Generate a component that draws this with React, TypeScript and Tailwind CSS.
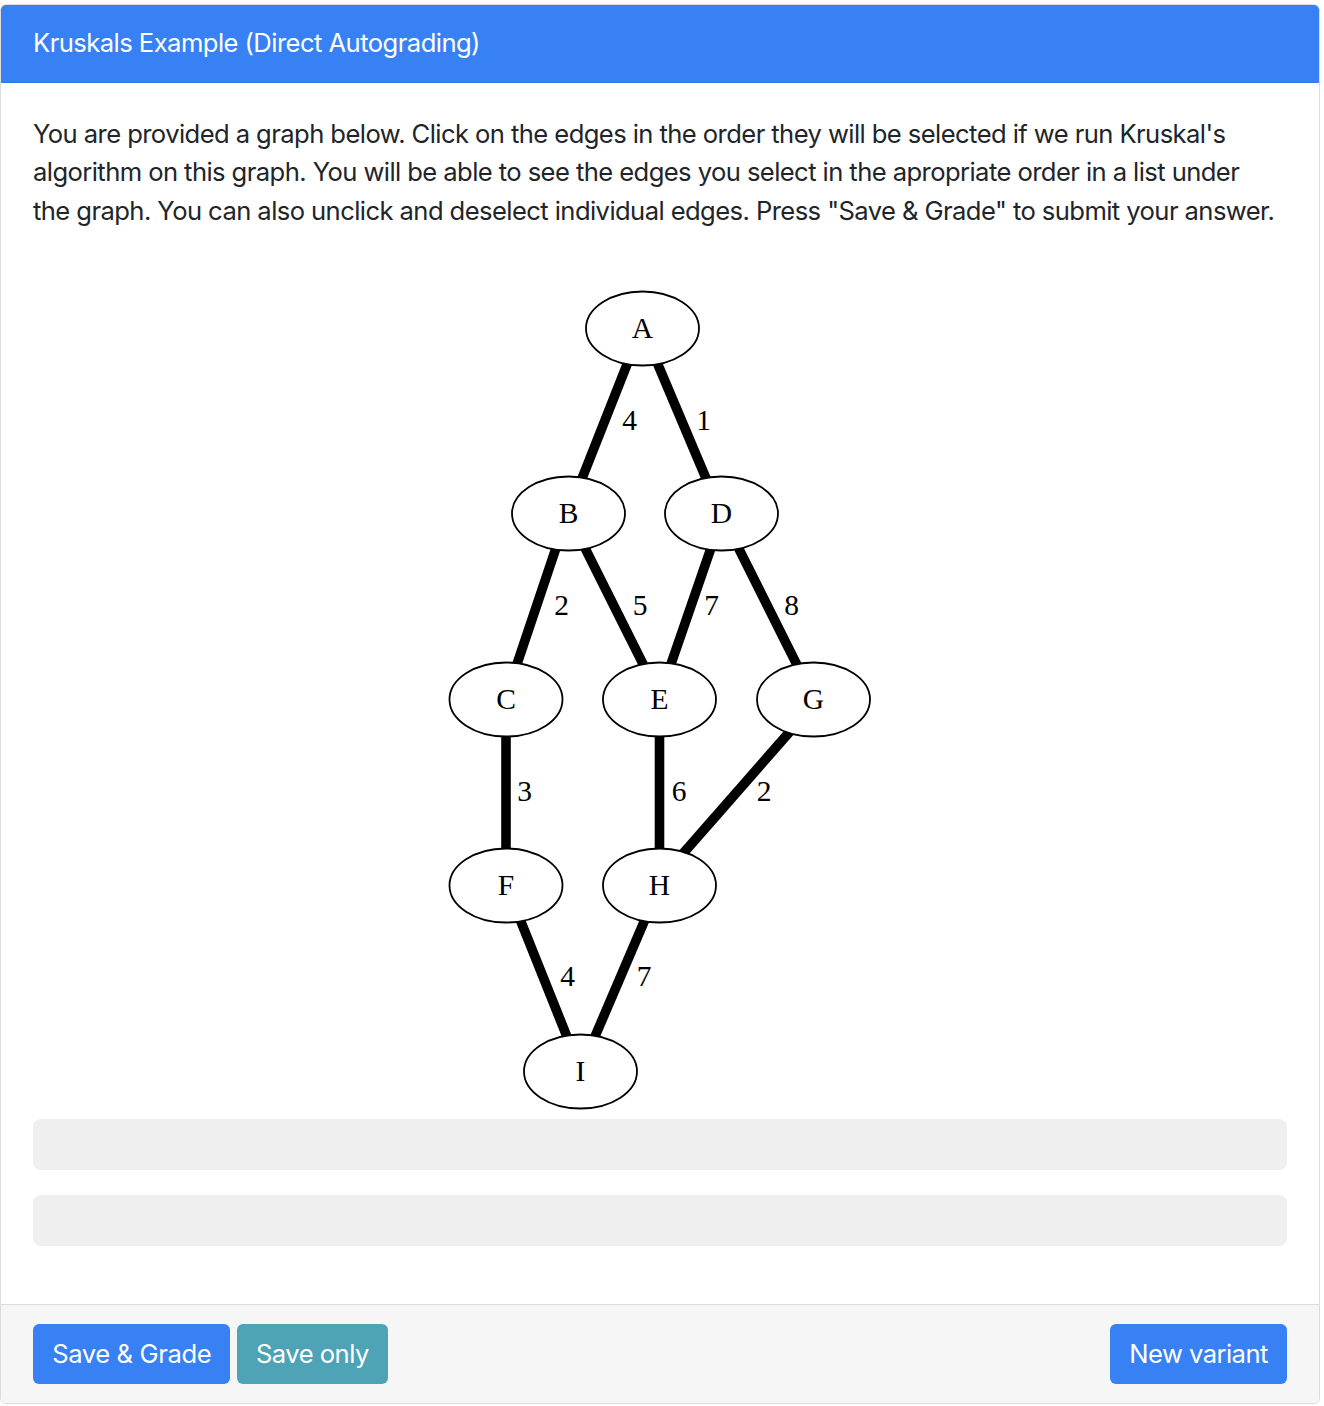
import React from "react";

type Pt = [number, number];

const nodes: { id: string; x: number; y: number }[] = [
  { id: "A", x: 642.5, y: 327.5 },
  { id: "B", x: 568.5, y: 512.5 },
  { id: "D", x: 721.5, y: 512.5 },
  { id: "C", x: 506, y: 698.5 },
  { id: "E", x: 659.5, y: 698.5 },
  { id: "G", x: 813.5, y: 698.5 },
  { id: "F", x: 506, y: 884.5 },
  { id: "H", x: 659.5, y: 884.5 },
  { id: "I", x: 580.5, y: 1070.5 },
];

const edges: { a: Pt; b: Pt; label: string; lx: number; ly: number }[] = [
  { a: [626, 366], b: [583, 475], label: "4", lx: 629.5, ly: 419 },
  { a: [659, 366], b: [705, 475], label: "1", lx: 703.5, ly: 419 },
  { a: [555, 550], b: [518, 660], label: "2", lx: 561.5, ly: 604 },
  { a: [586.5, 550], b: [641.5, 660], label: "5", lx: 640, ly: 604 },
  { a: [710, 550], b: [672, 660], label: "7", lx: 711.5, ly: 604 },
  { a: [740, 550], b: [795, 660], label: "8", lx: 791.5, ly: 604 },
  { a: [506, 736], b: [506, 847], label: "3", lx: 524.5, ly: 790 },
  { a: [659.5, 736], b: [659.5, 847], label: "6", lx: 679, ly: 790 },
  { a: [786, 735], b: [687, 848], label: "2", lx: 764, ly: 790 },
  { a: [521.5, 922], b: [565.5, 1032], label: "4", lx: 567.5, ly: 975 },
  { a: [643.5, 922], b: [596.5, 1032], label: "7", lx: 644, ly: 975 },
];

function ext(a: Pt, b: Pt, d: number): [Pt, Pt] {
  const dx = b[0] - a[0];
  const dy = b[1] - a[1];
  const l = Math.hypot(dx, dy);
  const ux = dx / l;
  const uy = dy / l;
  return [
    [a[0] - ux * d, a[1] - uy * d],
    [b[0] + ux * d, b[1] + uy * d],
  ];
}

function Graph() {
  return (
    <svg
      width="1254"
      height="863"
      viewBox="33 255 1254 863"
      className="block"
      style={{ fontFamily: '"Liberation Serif", "Times New Roman", serif' }}
    >
      {edges.map((e, i) => {
        const [p, q] = ext(e.a, e.b, 10);
        return (
          <g key={i}>
            <line x1={p[0]} y1={p[1]} x2={q[0]} y2={q[1]} stroke="#000" strokeWidth={9.6} />
            <text x={e.lx} y={e.ly + 9.5} fontSize="29.5" textAnchor="middle" fill="#000">
              {e.label}
            </text>
          </g>
        );
      })}
      {nodes.map((n) => (
        <g key={n.id}>
          <ellipse cx={n.x} cy={n.y} rx={56.5} ry={37} fill="#fff" stroke="#000" strokeWidth={1.8} />
          <text x={n.x} y={n.y + 9} fontSize="29.5" textAnchor="middle" fill="#000">
            {n.id}
          </text>
        </g>
      ))}
    </svg>
  );
}

export default function App() {
  return (
    <div
      className="w-[1324px] h-[1406px] bg-white pt-[4px]"
      style={{ fontFamily: 'Inter, "Noto Sans", "Liberation Sans", sans-serif' }}
    >
      <div className="w-[1320px] border border-[#dcdcdc] rounded-[6px] overflow-hidden bg-white">
        <div className="h-[78px] bg-[#3781f5] border-b border-[#3177e6] px-[32px] flex items-center text-white text-[25.6px] leading-[38.4px] tracking-[-0.55px]">
          Kruskals Example (Direct Autograding)
        </div>
        <div className="px-[32px] py-[32px]">
          <p className="text-[25.6px] leading-[38.4px] text-[#212529] mb-[25.6px] tracking-[-0.58px] whitespace-nowrap">
            You are provided a graph below. Click on the edges in the order they will be selected if we run Kruskal's
            <br />
            algorithm on this graph. You will be able to see the edges you select in the apropriate order in a list under
            <br />
            the graph. You can also unclick and deselect individual edges. Press "Save &amp; Grade" to submit your answer.
          </p>
          <Graph />
          <div className="h-[51px] rounded-[8px] bg-[#efefef] mb-[25.6px]" />
          <div className="h-[51px] rounded-[8px] bg-[#efefef] mb-[25.6px]" />
        </div>
        <div className="border-t border-[#dcdcdc] bg-[#f6f6f6] px-[32px] py-[19.2px] flex items-center">
          <button className="h-[59.6px] px-[19.2px] rounded-[6px] bg-[#3781f5] text-white text-[25.6px] leading-[38.4px] tracking-[-0.4px]">
            Save &amp; Grade
          </button>
          <button className="ml-[6.4px] h-[59.6px] px-[19.2px] rounded-[6px] bg-[#4ea3b6] text-white text-[25.6px] leading-[38.4px] tracking-[-0.53px]">
            Save only
          </button>
          <div className="flex-1" />
          <button className="h-[59.6px] px-[19.2px] rounded-[6px] bg-[#3781f5] text-white text-[25.6px] leading-[38.4px] tracking-[-0.56px]">
            New variant
          </button>
        </div>
      </div>
    </div>
  );
}
